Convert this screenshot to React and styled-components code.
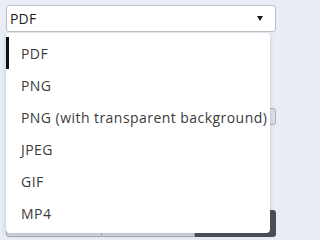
import React from "react";
import styled, { createGlobalStyle } from "styled-components";

const Global = createGlobalStyle`
  html, body { margin: 0; padding: 0; background: #e9eef6; }
  body { font-family: "Open Sans", "Liberation Sans", sans-serif; }
  * { box-sizing: border-box; }
`;

const Page = styled.div`
  width: 279px;
  height: 240px;
  padding: 5px 3px 0 6px;
  display: flex;
  flex-direction: column;
  overflow: hidden;
`;

const SelectWrap = styled.div`
  position: relative;
`;

const SelectBox = styled.div`
  height: 27px;
  background: #fff;
  border: 1px solid #b9bec7;
  border-radius: 3px;
  display: flex;
  align-items: center;
  justify-content: space-between;
  padding: 0 12px 0 3px;
  font-size: 14px;
  letter-spacing: 0.2px;
  color: #1e1e1e;
`;

const Arrow = styled.span`
  width: 0;
  height: 0;
  border-left: 3.5px solid transparent;
  border-right: 3.5px solid transparent;
  border-top: 5px solid #1a1a1a;
`;

const Menu = styled.ul`
  position: absolute;
  top: 28px;
  left: 0;
  width: 264px;
  margin: 0;
  padding: 4px 0;
  list-style: none;
  background: #fff;
  border-radius: 4px;
  box-shadow: 0 2px 5px rgba(60, 70, 90, 0.25);
  z-index: 2;
`;

const Item = styled.li`
  height: 32px;
  display: flex;
  align-items: center;
  padding-left: 12px;
  font-size: 14px;
  letter-spacing: 0.45px;
  color: #3b3b3b;
  white-space: nowrap;
  border-left: 3px solid ${(p) => (p.$active ? "#0b0f17" : "transparent")};
`;

const Field = styled.div`
  margin-top: 76px;
  height: 17px;
  background: #dde2ea;
  border: 1px solid #a9aeb6;
  border-radius: 3px;
`;

const ButtonRow = styled.div`
  margin-top: 85px;
  display: flex;
  height: 27px;
`;

const GhostButton = styled.div`
  flex: 0 0 ${(p) => p.$w}px;
  background: #dfe3ea;
  border: 1px solid #a9aeb6;
  border-left-width: ${(p) => (p.$first ? 1 : 0)}px;
  border-radius: ${(p) => (p.$first ? "3px 0 0 3px" : "0")};
`;

const DarkButton = styled.div`
  flex: 1;
  background: #4b4f59;
  border-radius: 0 3px 3px 0;
`;

const options = [
  "PDF",
  "PNG",
  "PNG (with transparent background)",
  "JPEG",
  "GIF",
  "MP4",
];

export default function App() {
  return (
    <>
      <Global />
      <Page>
        <SelectWrap>
          <SelectBox>
            <span>PDF</span>
            <Arrow />
          </SelectBox>
          <Menu>
            {options.map((o, i) => (
              <Item key={o} $active={i === 0}>
                {o}
              </Item>
            ))}
          </Menu>
        </SelectWrap>
        <Field />
        <ButtonRow>
          <GhostButton $w={96} $first />
          <GhostButton $w={93} />
          <DarkButton />
        </ButtonRow>
      </Page>
    </>
  );
}
